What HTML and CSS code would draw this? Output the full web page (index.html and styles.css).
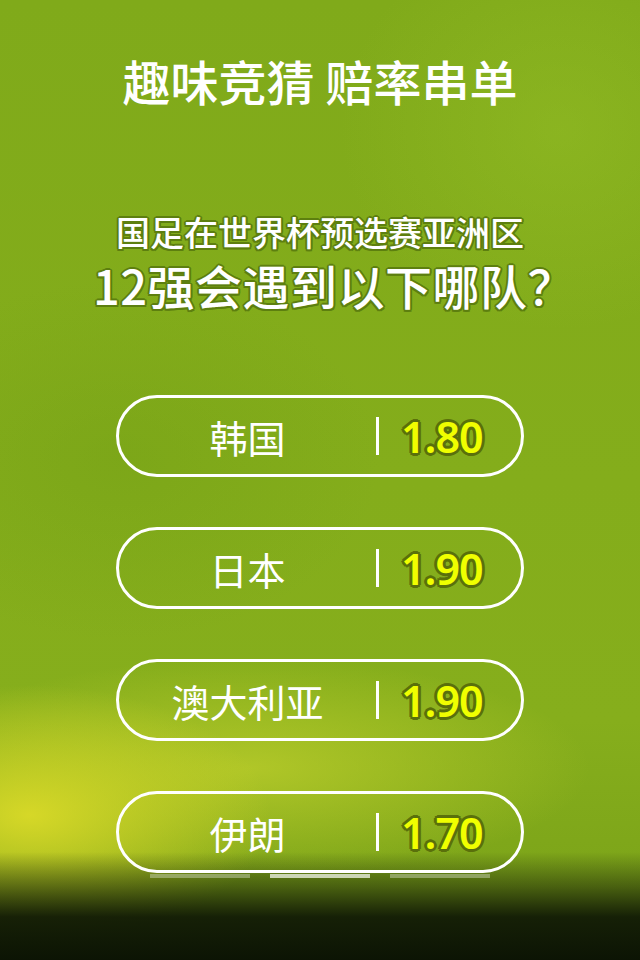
FILE: index.html
```html
<!DOCTYPE html>
<html lang="zh-CN">
<head>
<meta charset="utf-8">
<title>趣味竞猜 赔率串单</title>
<link rel="stylesheet" href="styles.css">
</head>
<body>
<div class="page">
  <h1 class="title">趣味竞猜 赔率串单</h1>
  <div class="question">
    <p class="q1">国足在世界杯预选赛亚洲区</p>
    <p class="q2">12强会遇到以下哪队？</p>
  </div>
  <ul class="options">
    <li class="option"><span class="name">韩国</span><span class="sep"></span><span class="odds">1.80</span></li>
    <li class="option"><span class="name">日本</span><span class="sep"></span><span class="odds">1.90</span></li>
    <li class="option"><span class="name">澳大利亚</span><span class="sep"></span><span class="odds">1.90</span></li>
    <li class="option"><span class="name">伊朗</span><span class="sep"></span><span class="odds">1.70</span></li>
  </ul>
  <div class="dots">
    <span class="dot"></span><span class="dot active"></span><span class="dot"></span>
  </div>
</div>
</body>
</html>
```
FILE: styles.css
```css
* { box-sizing: border-box; }
html, body { margin: 0; padding: 0; }
body {
  width: 640px;
  height: 960px;
  overflow: hidden;
  font-family: "Noto Sans CJK SC", "Noto Sans", sans-serif;
  color: #fff;
}
.page {
  width: 640px;
  height: 960px;
  overflow: hidden;
  display: flex;
  flex-direction: column;
  align-items: center;
  background:
    linear-gradient(to bottom, rgba(10,18,4,0) 0px, rgba(10,18,4,0) 852px, rgba(30,40,8,0.55) 887px, rgba(14,22,5,0.93) 917px, #0c1404 960px),
    radial-gradient(ellipse 240px 130px at 30px 815px, rgba(218,218,40,0.95), rgba(218,218,40,0) 100%),
    radial-gradient(ellipse 340px 110px at 250px 768px, rgba(195,210,45,0.7), rgba(195,210,45,0) 100%),
    radial-gradient(ellipse 220px 200px at 560px 130px, rgba(150,192,40,0.45), rgba(150,192,40,0) 100%),
    radial-gradient(ellipse 260px 180px at 120px 460px, rgba(110,155,20,0.35), rgba(110,155,20,0) 100%),
    linear-gradient(to bottom, #80aa1a 0%, #84ad1b 50%, #86ae1c 75%, #78a018 100%);
}
.title {
  margin: 52px 0 0;
  font-size: 48px;
  line-height: 56px;
  font-weight: 500;
  text-align: center;
}
.question {
  margin-top: 102px;
  text-align: center;
}
.question p {
  margin: 0;
  font-weight: 500;
  text-shadow:
    2px 0 0 #5d7f0f, -2px 0 0 #5d7f0f, 0 2px 0 #5d7f0f, 0 -2px 0 #5d7f0f,
    1.5px 1.5px 0 #5d7f0f, -1.5px 1.5px 0 #5d7f0f, 1.5px -1.5px 0 #5d7f0f, -1.5px -1.5px 0 #5d7f0f;
}
.q1 {
  font-size: 34px;
  line-height: 44px;
}
.question .q2 {
  font-size: 47px;
  line-height: 58px;
  margin-top: 2px;
  padding-left: 28px;
  letter-spacing: 0.5px;
  font-weight: 500;
}
.options {
  list-style: none;
  margin: 81px 0 0;
  padding: 0;
  display: flex;
  flex-direction: column;
  gap: 50px;
}
.option {
  width: 408px;
  height: 82px;
  border: 3.5px solid #fff;
  border-radius: 41px;
  display: flex;
  align-items: center;
}
.name {
  width: 257px;
  text-align: center;
  font-size: 38px;
  font-weight: 400;
  line-height: 1;
  padding-top: 2px;
}
.sep {
  width: 3px;
  height: 38px;
  background: #fff;
}
.odds {
  margin-left: 22px;
  font-family: "Noto Sans", "Open Sans", sans-serif;
  font-size: 43px;
  font-weight: 600;
  letter-spacing: -1px;
  line-height: 1;
  color: #f0ff00;
  text-shadow:
    3px 0 0 #5a700b, -3px 0 0 #5a700b, 0 3px 0 #5a700b, 0 -3px 0 #5a700b,
    2px 2px 0 #5a700b, -2px 2px 0 #5a700b, 2px -2px 0 #5a700b, -2px -2px 0 #5a700b;
}
.dots {
  margin-top: 1px;
  display: flex;
  gap: 20px;
}
.dot {
  width: 100px;
  height: 4px;
  background: rgba(200, 210, 180, 0.5);
}
.dot.active {
  background: rgba(225, 232, 210, 0.85);
}
```
